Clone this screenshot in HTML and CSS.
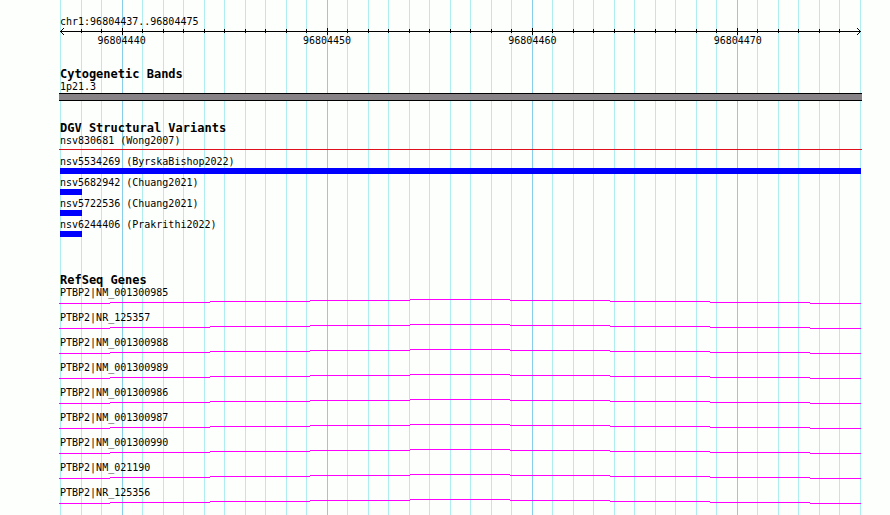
FILE: index.html
```
<!DOCTYPE html>
<html lang="en">

<head>
    <meta charset="UTF-8">
    <meta name="viewport" content="width=device-width, initial-scale=1.0">
    <title>chr1:96804437..96804475</title>
    <link rel="stylesheet" href="styles.css">
</head>

<body>
    <!-- Shared intron shape for the gene tracks -->
    <svg class="defs" aria-hidden="true">
        <symbol id="intron" viewBox="0 0 802 5" preserveAspectRatio="none">
            <path d="M0 4.5H51M51 3.5H151M151 2.5H251M251 1.5H351M351 0.5H451M451 1.5H551M551 2.5H651M651 3.5H751M751 4.5H802"/>
        </symbol>
    </svg>

    <main class="browser">
        <!-- One line per base -->
        <div class="grid-lines" aria-hidden="true">
            <i></i><i></i><i></i><i class="major"></i><i></i><i></i><i></i><i></i><i></i><i></i>
            <i></i><i></i><i></i><i class="major"></i><i></i><i></i><i></i><i></i><i></i><i></i>
            <i></i><i></i><i></i><i class="major"></i><i></i><i></i><i></i><i></i><i></i><i></i>
            <i></i><i></i><i></i><i class="major"></i><i></i><i></i><i></i><i></i><i></i><i></i>
        </div>

        <div class="tracks">
            <section class="track">
                <p class="label">chr1:96804437..96804475</p>
                <div class="axis" aria-hidden="true">
                    <i class="arrow"><svg class="arrow-left" width="4" height="7" viewBox="0 0 4 7"><path d="M3 0h1v1H3zM2 1h1v1H2zM1 2h1v1H1zM0 3h1v1H0zM1 4h1v1H1zM2 5h1v1H2zM3 6h1v1H3z"/></svg></i>
                    <i></i><i></i><i class="major"></i><i></i><i></i><i></i><i></i><i></i><i></i>
                    <i></i><i></i><i></i><i class="major"></i><i></i><i></i><i></i><i></i><i></i><i></i>
                    <i></i><i></i><i></i><i class="major"></i><i></i><i></i><i></i><i></i><i></i><i></i>
                    <i></i><i></i><i></i><i class="major"></i><i></i><i></i><i></i><i></i><i></i>
                    <i class="arrow"><svg class="arrow-right" width="4" height="7" viewBox="0 0 4 7"><path d="M0 0h1v1H0zM1 1h1v1H1zM2 2h1v1H2zM3 3h1v1H3zM2 4h1v1H2zM1 5h1v1H1zM0 6h1v1H0z"/></svg></i>
                </div>
                <div class="positions">
                    <span class="pos-40">96804440</span>
                    <span class="pos-50">96804450</span>
                    <span class="pos-60">96804460</span>
                    <span class="pos-70">96804470</span>
                </div>
            </section>

            <section class="track">
                <h2>Cytogenetic Bands</h2>
                <p class="label">1p21.3</p>
                <div class="band"></div>
            </section>

            <section class="track variants">
                <h2>DGV Structural Variants</h2>
                <ul>
                    <li><span class="label">nsv830681 (Wong2007)</span><div class="variant loss"></div></li>
                    <li><span class="label">nsv5534269 (ByrskaBishop2022)</span><div class="variant gain"></div></li>
                    <li><span class="label">nsv5682942 (Chuang2021)</span><div class="variant gain short"></div></li>
                    <li><span class="label">nsv5722536 (Chuang2021)</span><div class="variant gain short"></div></li>
                    <li><span class="label">nsv6244406 (Prakrithi2022)</span><div class="variant gain short"></div></li>
                </ul>
            </section>

            <section class="track genes">
                <h2>RefSeq Genes</h2>
                <ul>
                    <li><span class="label">PTBP2|NM_001300985</span><svg class="gene"><use href="#intron"/></svg></li>
                    <li><span class="label">PTBP2|NR_125357</span><svg class="gene"><use href="#intron"/></svg></li>
                    <li><span class="label">PTBP2|NM_001300988</span><svg class="gene"><use href="#intron"/></svg></li>
                    <li><span class="label">PTBP2|NM_001300989</span><svg class="gene"><use href="#intron"/></svg></li>
                    <li><span class="label">PTBP2|NM_001300986</span><svg class="gene"><use href="#intron"/></svg></li>
                    <li><span class="label">PTBP2|NM_001300987</span><svg class="gene"><use href="#intron"/></svg></li>
                    <li><span class="label">PTBP2|NM_001300990</span><svg class="gene"><use href="#intron"/></svg></li>
                    <li><span class="label">PTBP2|NM_021190</span><svg class="gene"><use href="#intron"/></svg></li>
                    <li><span class="label">PTBP2|NR_125356</span><svg class="gene"><use href="#intron"/></svg></li>
                </ul>
            </section>
        </div>
    </main>
</body>

</html>
```
FILE: styles.css
```
/* Variables */
:root {
    --background-color: #fdfffc;
    --text-color: #000;
    --grid-color: #afeeee;
    --grid-major-color: #87ceeb;
    --band-color: #868286;
    --gain-color: #0000ff;
    --loss-color: #e0101c;
    --gene-color: #ff00ff;
}

/* Global Styles */
body {
    margin: 0;
    background-color: var(--background-color);
    color: var(--text-color);
    font-family: "DejaVu Sans Mono", "Liberation Mono", monospace;
    font-size: 10px;
    line-height: 12px;
}

h2 {
    margin: 0;
    font-size: 12px;
    line-height: 14px;
}

p {
    margin: 0;
}

ul {
    display: flex;
    flex-direction: column;
    margin: 0;
    padding: 0;
    list-style: none;
}

.defs {
    display: none;
}

/* Layout: the grid lines and the tracks share one cell */
.browser {
    display: grid;
    grid-template-columns: minmax(0, 1fr);
    box-sizing: border-box;
    min-height: 100vh;
    padding: 0 29px 0 60px;
}

.grid-lines,
.tracks {
    grid-area: 1 / 1;
}

.grid-lines {
    display: flex;
    justify-content: space-between;
}

.grid-lines i {
    width: 1px;
    background-color: var(--grid-color);
}

.grid-lines .major {
    background-color: var(--grid-major-color);
}

.tracks {
    display: flex;
    flex-direction: column;
    gap: 20px;
    padding: 16px 0 11px;
}

.label {
    display: block;
    white-space: nowrap;
}

/* Ruler */
.axis {
    display: flex;
    justify-content: space-between;
    height: 7px;
    background: linear-gradient(#000, #000) 0 3px / 100% 1px no-repeat;
}

.axis i {
    width: 1px;
    height: 4px;
    margin-top: 1px;
    background-color: #000;
}

.axis .major {
    height: 7px;
    margin-top: 0;
}

.axis .arrow {
    display: flex;
    height: 7px;
    margin-top: 0;
    background: none;
}

.axis .arrow:last-child {
    justify-content: flex-end;
}

.axis svg {
    flex: none;
}

.positions {
    display: grid;
    grid-template-columns: repeat(39, minmax(0, 1fr));
    text-align: center;
}

.pos-40 {
    grid-column: 1 / span 6;
}

.pos-50 {
    grid-column: 11 / span 6;
}

.pos-60 {
    grid-column: 21 / span 6;
}

.pos-70 {
    grid-column: 31 / span 6;
}

/* Cytogenetic band */
.band {
    height: 6px;
    margin: 0 -1px;
    border-top: 1px solid #000;
    border-bottom: 1px solid #000;
    background-color: var(--band-color);
}

/* Structural variants */
.variants {
    padding-bottom: 16px;
}

.variants ul {
    gap: 3px;
}

.variant {
    height: 6px;
}

.gain {
    background-color: var(--gain-color);
}

.loss {
    margin: 0 -1px;
    background: linear-gradient(var(--loss-color), var(--loss-color)) 0 2px / 100% 1px no-repeat;
}

.short {
    width: calc(100% / 39 + 1px);
}

/* Genes */
.genes ul {
    gap: 8px;
}

.genes li {
    display: flex;
    flex-direction: column;
}

.gene {
    height: 5px;
    width: calc(100% + 1px);
    margin-left: -1px;
    fill: none;
    stroke: var(--gene-color);
    stroke-width: 1px;
    shape-rendering: crispEdges;
}
```
